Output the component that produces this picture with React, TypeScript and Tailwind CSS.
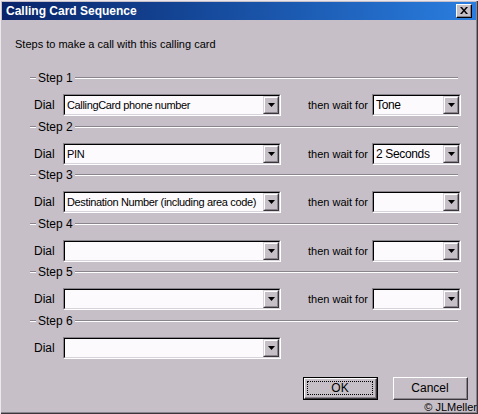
import React from 'react';

type Step = { dial: string; wait: string | null };

const steps: Step[] = [
  { dial: 'CallingCard phone number', wait: 'Tone' },
  { dial: 'PIN', wait: '2 Seconds' },
  { dial: 'Destination Number (including area code)', wait: '' },
  { dial: '', wait: '' },
  { dial: '', wait: '' },
  { dial: '', wait: null },
];

function Etched({ className = '' }: { className?: string }) {
  return <div className={`h-[2px] border-t border-t-[#8a848c] border-b border-b-white ${className}`} />;
}

function Combo({ value, className }: { value: string; className: string }) {
  return (
    <div className={`shrink-0 h-[22px] flex border-t border-l border-t-[#8a848c] border-l-[#8a848c] border-r border-b border-r-white border-b-white ${className}`}>
      <div className="flex-1 min-w-0 flex border-t border-l border-t-black border-l-black border-r border-b border-r-[#d8d2da] border-b-[#d8d2da] bg-[#fdfafd]">
        <div className="flex-1 min-w-0 pl-[2px] leading-[18px] tracking-[-0.35px] whitespace-nowrap overflow-hidden">{value}</div>
        <div className="shrink-0 w-[16px] h-[18px] flex border-t border-l border-t-[#d8d2da] border-l-[#d8d2da] border-r border-b border-r-[#3a363c] border-b-[#3a363c]">
          <div className="flex-1 flex items-center justify-center bg-[#c6bfc7] border-t border-l border-t-white border-l-white border-r border-b border-r-[#8a848c] border-b-[#8a848c]">
            <svg width="7" height="4" viewBox="0 0 7 4">
              <path d="M0 0h7L3.5 4z" fill="#000" />
            </svg>
          </div>
        </div>
      </div>
    </div>
  );
}

function Button({ label, isDefault }: { label: string; isDefault?: boolean }) {
  return (
    <div className={`w-[75px] h-[23px] flex ${isDefault ? 'border border-black' : ''}`}>
      <div className="flex-1 flex border-t border-l border-t-white border-l-white border-r border-b border-r-[#3a363c] border-b-[#3a363c]">
        <div className="flex-1 flex p-[2px] border-r border-b border-r-[#8a848c] border-b-[#8a848c]">
          <div className={`flex-1 flex items-center justify-center ${isDefault ? 'border border-dotted border-black' : ''}`}>
            {label}
          </div>
        </div>
      </div>
    </div>
  );
}

export default function App() {
  return (
    <div
      className="w-[478px] h-[414px] bg-[#c6bfc7] text-black text-[11px] flex flex-col shadow-[inset_1px_1px_0_#ece8ee,inset_-1px_-1px_0_#3a363c,inset_-2px_-2px_0_#8a848c]"
      style={{ fontFamily: '"Liberation Sans", Arial, sans-serif' }}
    >
      <div className="mx-[2px] mt-[2px] h-[18px] flex items-center justify-between bg-linear-to-r from-[#0a246a] to-[#2a7ee0] pl-[4px] pr-[4px]">
        <span className="text-white font-bold text-[12px]">Calling Card Sequence</span>
        <div className="w-[16px] h-[14px] flex border-t border-l border-t-white border-l-white border-r border-b border-r-black border-b-black">
          <div className="flex-1 flex items-center justify-center bg-[#c6bfc7] border-r border-b border-r-[#8a848c] border-b-[#8a848c]">
            <svg width="8" height="7" viewBox="0 0 8 7">
              <path d="M0 0h2l2 2.5L6 0h2L5 3.5 8 7H6L4 4.5 2 7H0l3-3.5z" fill="#000" />
            </svg>
          </div>
        </div>
      </div>

      <p className="mt-[17px] pl-[15px] leading-[14px]">Steps to make a call with this calling card</p>

      <div className="mt-[19px] flex flex-col">
        {steps.map((s, i) => (
          <div key={i} className={i % 2 === 0 ? 'h-[49px]' : 'h-[48px]'}>
            <div className="h-[16px] flex items-center pl-[30px] pr-[20px]">
              <Etched className="w-[6px]" />
              <span className="px-[2px] text-[12px]">Step {i + 1}</span>
              <Etched className="flex-1" />
            </div>
            <div className="mt-[8px] h-[22px] flex items-center pl-[34px]">
              <span className="shrink-0 w-[29px] text-[12px]">Dial</span>
              <Combo value={s.dial} className="w-[218px]" />
              {s.wait !== null && (
                <>
                  <span className="shrink-0 ml-[27px] w-[64px] whitespace-nowrap">then wait for</span>
                  <Combo value={s.wait} className="w-[89px] text-[12px]" />
                </>
              )}
            </div>
          </div>
        ))}
      </div>

      <div className="mt-[16px] flex justify-end gap-[15px] pr-[10px] text-[12px]">
        <Button label="OK" isDefault />
        <Button label="Cancel" />
      </div>
      <div className="mt-[2px] flex justify-end pr-[1px] leading-[11px] text-[11px]">© JLMeller</div>
    </div>
  );
}
